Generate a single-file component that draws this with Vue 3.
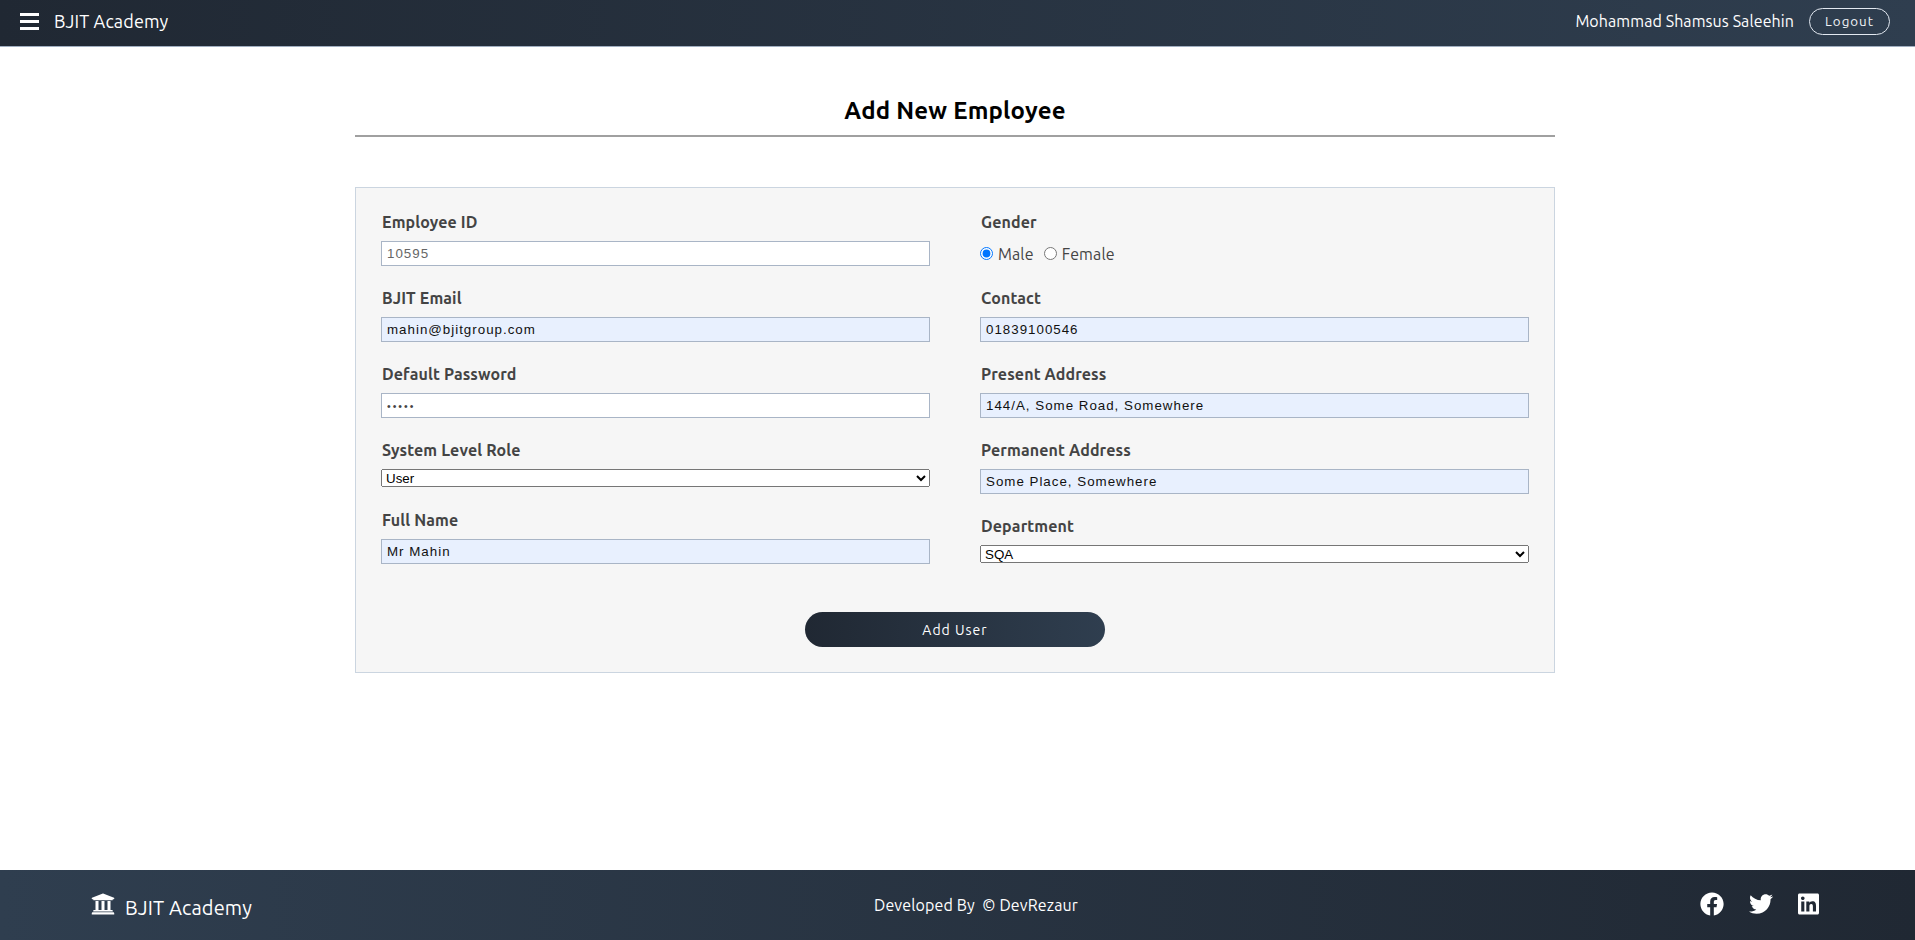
<script setup>
const leftFields = [
  { label: 'Employee ID', value: '10595', type: 'text', kind: 'locked' },
  { label: 'BJIT Email', value: 'mahin@bjitgroup.com', type: 'email', kind: 'filled' },
  { label: 'Default Password', value: 'mahin', type: 'password', kind: '' },
  { label: 'System Level Role', options: ['User', 'Admin'] },
  { label: 'Full Name', value: 'Mr Mahin', type: 'text', kind: 'filled' }
];

const rightFields = [
  { label: 'Contact', value: '01839100546', type: 'text', kind: 'filled' },
  { label: 'Present Address', value: '144/A, Some Road, Somewhere', type: 'text', kind: 'filled' },
  { label: 'Permanent Address', value: 'Some Place, Somewhere', type: 'text', kind: 'filled' },
  { label: 'Department', options: ['SQA', 'Software Development'] }
];
</script>

<template>
  <div class="page">
    <header class="topbar">
      <div class="topbar-left">
        <span class="burger"><i></i><i></i><i></i></span>
        <span class="topbar-brand">BJIT Academy</span>
      </div>
      <div class="topbar-right">
        <span class="username">Mohammad Shamsus Saleehin</span>
        <button class="logout" type="button">Logout</button>
      </div>
    </header>

    <main class="content">
      <h2 class="title">Add New Employee</h2>
      <form class="panel" @submit.prevent>
        <div class="columns">
          <div class="column">
            <div v-for="f in leftFields" :key="f.label" class="group" :class="{ 'has-select': f.options }">
              <label class="label">{{ f.label }}</label>
              <select v-if="f.options" class="select">
                <option v-for="o in f.options" :key="o">{{ o }}</option>
              </select>
              <input v-else class="input" :class="f.kind" :type="f.type" :value="f.value" :readonly="f.kind === 'locked'">
            </div>
          </div>
          <div class="column">
            <div class="group">
              <label class="label">Gender</label>
              <div class="radios">
                <input id="male" type="radio" name="gender" checked>
                <label for="male">Male</label>
                <input id="female" type="radio" name="gender">
                <label for="female">Female</label>
              </div>
            </div>
            <div v-for="f in rightFields" :key="f.label" class="group">
              <label class="label">{{ f.label }}</label>
              <select v-if="f.options" class="select">
                <option v-for="o in f.options" :key="o">{{ o }}</option>
              </select>
              <input v-else class="input" :class="f.kind" :type="f.type" :value="f.value">
            </div>
          </div>
        </div>
        <button class="submit" type="submit">Add User</button>
      </form>
    </main>

    <footer class="footer">
      <div class="footer-brand">
        <svg class="bank" viewBox="0 0 512 512" fill="currentColor"><path d="M496 128v16a8 8 0 0 1-8 8h-24v12c0 6.627-5.373 12-12 12H60c-6.627 0-12-5.373-12-12v-12H24a8 8 0 0 1-8-8v-16a8 8 0 0 1 4.941-7.392l232-88a7.996 7.996 0 0 1 6.118 0l232 88A8 8 0 0 1 496 128zm-24 304H40c-13.255 0-24 10.745-24 24v16a8 8 0 0 0 8 8h464a8 8 0 0 0 8-8v-16c0-13.255-10.745-24-24-24zM96 192v192H60c-6.627 0-12 5.373-12 12v20h416v-20c0-6.627-5.373-12-12-12h-36V192h-64v192h-64V192h-64v192h-64V192H96z"/></svg>
        <span>BJIT Academy</span>
      </div>
      <div class="credit">Developed By &nbsp;© DevRezaur</div>
      <div class="social">
        <svg viewBox="0 0 512 512" fill="currentColor"><path d="M504 256C504 119 393 8 256 8S8 119 8 256c0 123.78 90.69 226.38 209.25 245V327.69h-63V256h63v-54.64c0-62.15 37-96.48 93.67-96.48 27.14 0 55.52 4.84 55.52 4.84v61h-31.28c-30.8 0-40.41 19.12-40.41 38.73V256h68.78l-11 71.69h-57.78V501C413.31 482.38 504 379.78 504 256z"/></svg>
        <svg viewBox="0 0 512 512" fill="currentColor"><path d="M459.37 151.716c.325 4.548.325 9.097.325 13.645 0 138.72-105.583 298.558-298.558 298.558-59.452 0-114.68-17.219-161.137-47.106 8.447.974 16.568 1.299 25.34 1.299 49.055 0 94.213-16.568 130.274-44.832-46.132-.975-84.792-31.188-98.112-72.772 6.498.974 12.995 1.624 19.818 1.624 9.421 0 18.843-1.3 27.614-3.573-48.081-9.747-84.143-51.98-84.143-102.985v-1.299c13.969 7.797 30.214 12.67 47.431 13.319-28.264-18.843-46.781-51.005-46.781-87.391 0-19.492 5.197-37.36 14.294-52.954 51.655 63.675 129.3 105.258 216.365 109.807-1.624-7.797-2.599-15.918-2.599-24.04 0-57.828 46.782-104.934 104.934-104.934 30.213 0 57.502 12.67 76.67 33.137 23.715-4.548 46.456-13.32 66.599-25.34-7.798 24.366-24.366 44.833-47.431 58.478 22.515-2.599 44.05-8.772 64.19-17.544-15.268 22.165-34.436 41.006-56.85 57.235z"/></svg>
        <svg class="linkedin" viewBox="0 0 448 512" fill="currentColor"><path d="M416 32H31.9C14.3 32 0 46.5 0 64.3v383.4C0 465.5 14.3 480 31.9 480H416c17.6 0 32-14.5 32-32.3V64.3c0-17.8-14.4-32.3-32-32.3zM135.4 416H69V202.2h66.5V416zm-33.2-243c-21.3 0-38.5-17.3-38.5-38.5S80.9 96 102.2 96c21.2 0 38.5 17.3 38.5 38.5 0 21.3-17.2 38.5-38.5 38.5zm282.1 243h-66.4V312c0-24.8-.5-56.7-34.5-56.7-34.6 0-39.9 27-39.9 54.9V416h-66.4V202.2h63.7v29.2h.9c8.9-16.8 30.6-34.5 62.9-34.5 67.2 0 79.7 44.3 79.7 101.9V416z"/></svg>
      </div>
    </footer>
  </div>
</template>

<style>
body {
  margin: 0;
}
</style>

<style scoped>
.page {
  display: flex;
  flex-direction: column;
  min-height: 100vh;
  font-family: "Ubuntu", "Noto Sans", sans-serif;
  letter-spacing: 0.12px;
  background: #fff;
}

.topbar {
  box-sizing: border-box;
  height: 47px;
  display: flex;
  align-items: center;
  justify-content: space-between;
  padding: 0 25px 4px 20px;
  background: linear-gradient(90deg, #202833, #2f3e4f);
  border-bottom: 1px solid #a0aec0;
  color: #fff;
}

.topbar-left,
.topbar-right {
  display: flex;
  align-items: center;
}

.burger {
  display: flex;
  flex-direction: column;
  justify-content: space-between;
  width: 19px;
  height: 17px;
  margin-right: 15px;
}

.burger i {
  display: block;
  height: 3px;
  background: #fff;
}

.topbar-brand {
  font-size: 18px;
}

.username {
  font-size: 16px;
  letter-spacing: 0.09px;
  margin-right: 15px;
}

.logout {
  width: 81px;
  height: 27px;
  padding: 0;
  background: transparent;
  border: 1px solid #e2e8f0;
  border-radius: 14px;
  color: #f0f3f7;
  font-family: inherit;
  font-size: 13.33px;
  letter-spacing: 1px;
}

.content {
  flex: 1;
  box-sizing: border-box;
  width: 1200px;
  margin-left: 355px;
  padding-top: 46px;
}

.title {
  margin: 0 0 50px;
  padding-bottom: 6px;
  border-bottom: 2px solid #a0a0a0;
  font-size: 24px;
  line-height: 36px;
  font-weight: 700;
  letter-spacing: 0.2px;
  text-align: center;
  color: #000;
}

.panel {
  box-sizing: border-box;
  display: flex;
  flex-direction: column;
  align-items: center;
  padding: 22px 25px 25px;
  background: #f6f6f6;
  border: 1px solid #cbd5e0;
}

.columns {
  width: 100%;
  display: grid;
  grid-template-columns: 1fr 1fr;
  column-gap: 50px;
}

.group {
  margin-bottom: 20px;
}

.group.has-select {
  margin-bottom: 21px;
}

.label {
  display: block;
  margin: 0 0 7px 1px;
  font-size: 16px;
  line-height: 24px;
  font-weight: 700;
  color: #444;
}

.input {
  display: block;
  box-sizing: border-box;
  width: 100%;
  height: 25px;
  padding: 0 5px;
  background: #fff;
  border: 1px solid #a9b5c6;
  border-radius: 0;
  outline: none;
  color: #111;
  font-size: 13.33px;
  letter-spacing: 1px;
}

.input.filled {
  background: #e8f0fe;
}

.input.locked {
  color: #666;
}

.input[type="password"] {
  font-size: 10.5px;
  letter-spacing: 2px;
  color: #444;
}

.select {
  display: block;
  box-sizing: border-box;
  width: 100%;
  height: 18px;
  font-size: 13.33px;
}

.radios {
  display: flex;
  align-items: center;
  height: 25px;
  font-size: 16px;
  color: #444;
}

.radios input {
  margin: 0 5px 0 0;
}

.radios label {
  margin-right: 10px;
}

.submit {
  width: 300px;
  height: 35px;
  margin-top: 28px;
  padding: 0;
  background: linear-gradient(90deg, #202833, #2f3e4f);
  border: none;
  border-radius: 18px;
  color: #fff;
  font-family: inherit;
  font-size: 14px;
  letter-spacing: 1px;
}

.footer {
  box-sizing: border-box;
  height: 70px;
  display: flex;
  align-items: center;
  justify-content: space-between;
  padding: 0 96px 0 91px;
  background: linear-gradient(90deg, #2f3e4f, #202833);
  color: #fff;
}

.footer-brand {
  display: flex;
  align-items: center;
  gap: 10px;
  font-size: 20px;
}

.bank {
  width: 24px;
  height: 24px;
  margin-top: -2px;
}

.footer-brand span {
  margin-top: 4px;
}

.credit {
  font-size: 16px;
}

.social {
  display: flex;
  align-items: center;
  gap: 25px;
}

.social svg {
  width: 24px;
  height: 24px;
  margin-top: -2px;
}

.social .linkedin {
  width: 21px;
}
</style>
